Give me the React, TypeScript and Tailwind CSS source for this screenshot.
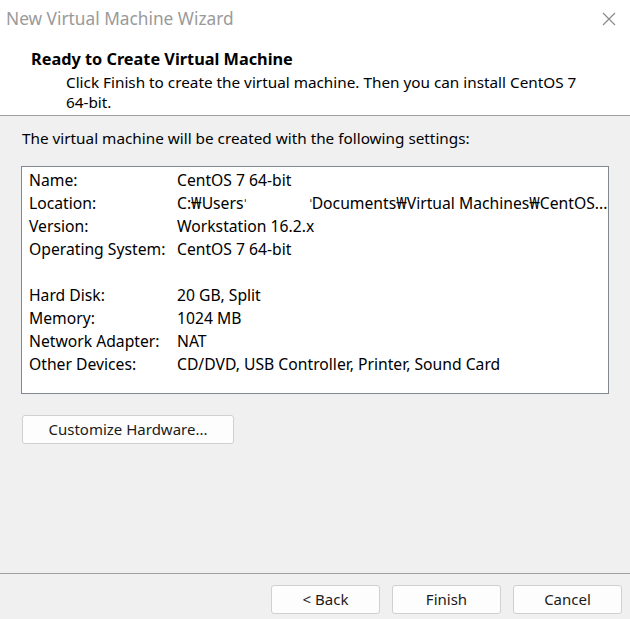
const font = { fontFamily: '"Noto Sans", "Noto Sans CJK KR", sans-serif' };

const rows: [string, string][] = [
  ['Name:', 'CentOS 7 64-bit'],
  ['Location:', ''],
  ['Version:', 'Workstation 16.2.x'],
  ['Operating System:', 'CentOS 7 64-bit'],
  ['', ''],
  ['Hard Disk:', '20 GB, Split'],
  ['Memory:', '1024 MB'],
  ['Network Adapter:', 'NAT'],
  ['Other Devices:', 'CD/DVD, USB Controller, Printer, Sound Card'],
];

function WinButton({ label, className }: { label: string; className: string }) {
  return (
    <button
      className={`h-[29px] rounded-[3px] border border-[#d0d0d0] bg-[#fdfdfd] text-[15px] text-[#1a1a1a] ${className}`}
    >
      {label}
    </button>
  );
}

export default function App() {
  return (
    <div className="w-[630px] h-[619px] flex flex-col bg-[#f0f0f0] text-[15.3px] text-black overflow-hidden" style={font}>
      {/* Header */}
      <div className="h-[116px] bg-white border-b border-[#a0a0a0] flex flex-col">
        <div className="h-[38px] flex items-center justify-between pl-[6px] pr-[14px]">
          <span className="text-[17.3px] text-[#9a9a9a] leading-none">New Virtual Machine Wizard</span>
          <svg width="14" height="14" viewBox="0 0 14 14" className="text-[#8a8a8a]">
            <path d="M1 1L13 13M13 1L1 13" stroke="currentColor" strokeWidth="1.2" fill="none" />
          </svg>
        </div>
        <div className="pl-[31px] mt-[11px] font-bold text-[16.3px] leading-[21px]">Ready to Create Virtual Machine</div>
        <div className="pl-[66px] pr-[40px] leading-[20px] mt-[2px]">
          Click Finish to create the virtual machine. Then you can install CentOS 7 64-bit.
        </div>
      </div>

      {/* Body */}
      <div className="flex-1 flex flex-col px-[21px]">
        <div className="mt-[12px] pl-[1px] leading-[20px]">The virtual machine will be created with the following settings:</div>
        <div className="mt-[18px] h-[228px] bg-white border border-[#828790] pt-[2px] pl-[7px] text-[15.7px]">
          {rows.map(([k, v], i) => (
            <div key={i} className="flex h-[23px] items-center whitespace-nowrap">
              <span className="w-[148px] shrink-0">{k}</span>
              {k === 'Location:' ? (
                <span className="flex items-center">
                  C:₩Users<span className="text-[10px] ml-[1px]">ˈ</span>
                  <span className="inline-block w-[64px]" />
                  <span className="text-[10px]">ˈ</span>Documents₩Virtual Machines₩CentOS...
                </span>
              ) : (
                <span>{v}</span>
              )}
            </div>
          ))}
        </div>
        <div className="mt-[21px]">
          <WinButton label="Customize Hardware..." className="w-[212px] ml-[1px]" />
        </div>
      </div>

      {/* Footer */}
      <div className="h-[46px] border-t border-[#a0a0a0] flex items-start justify-end gap-[12px] pt-[11px] pr-[8px]">
        <WinButton label="< Back" className="w-[109px]" />
        <WinButton label="Finish" className="w-[109px]" />
        <WinButton label="Cancel" className="w-[109px]" />
      </div>
    </div>
  );
}
